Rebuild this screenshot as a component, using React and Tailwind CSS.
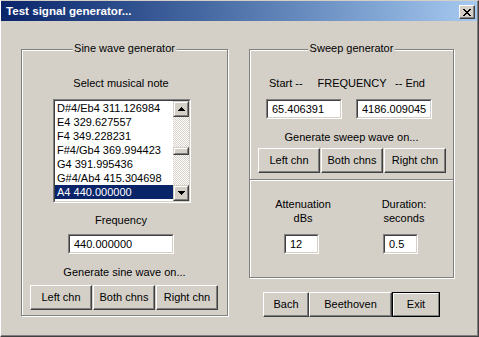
import React from "react";

const notes = [
  "D#4/Eb4 311.126984",
  "E4 329.627557",
  "F4 349.228231",
  "F#4/Gb4 369.994423",
  "G4 391.995436",
  "G#4/Ab4 415.304698",
  "A4 440.000000",
];

function Raised({ className = "", children }) {
  return (
    <div
      className={`flex items-center justify-center border border-t-white border-l-white border-b-[#404040] border-r-[#404040] shadow-[inset_-1px_-1px_0_#808080] bg-[#d4d0c8] ${className}`}
    >
      {children}
    </div>
  );
}

function Sunken({ className = "", innerClass = "", children }) {
  return (
    <div
      className={`border border-t-[#808080] border-l-[#808080] border-b-white border-r-white ${className}`}
    >
      <div
        className={`h-full w-full border border-t-[#404040] border-l-[#404040] border-b-[#d4d0c8] border-r-[#d4d0c8] bg-white ${innerClass}`}
      >
        {children}
      </div>
    </div>
  );
}

function Input({ value, className = "" }) {
  return (
    <Sunken className={`h-[20px] ${className}`} innerClass="flex items-center pl-[4px] leading-[13px]">
      <span>{value}</span>
    </Sunken>
  );
}

function ScrollBtn({ up }) {
  return (
    <div className="w-[16px] h-[16px] border border-t-[#d4d0c8] border-l-[#d4d0c8] border-b-[#404040] border-r-[#404040] bg-[#d4d0c8]">
      <div className="w-full h-full border border-t-white border-l-white border-b-[#808080] border-r-[#808080] flex items-center justify-center">
        <svg width="7" height="4" viewBox="0 0 7 4" shapeRendering="crispEdges">
          {up ? (
            <>
              <rect x="3" y="0" width="1" height="1" fill="#000" />
              <rect x="2" y="1" width="3" height="1" fill="#000" />
              <rect x="1" y="2" width="5" height="1" fill="#000" />
              <rect x="0" y="3" width="7" height="1" fill="#000" />
            </>
          ) : (
            <>
              <rect x="0" y="0" width="7" height="1" fill="#000" />
              <rect x="1" y="1" width="5" height="1" fill="#000" />
              <rect x="2" y="2" width="3" height="1" fill="#000" />
              <rect x="3" y="3" width="1" height="1" fill="#000" />
            </>
          )}
        </svg>
      </div>
    </div>
  );
}

function GroupLabel({ children }) {
  return (
    <div className="absolute left-1/2 -translate-x-1/2 top-[-8px] bg-[#d4d0c8] px-[2px] leading-[13px] whitespace-nowrap">
      {children}
    </div>
  );
}

const groupCls =
  "relative border border-[#808080] shadow-[inset_1px_1px_0_#fff,1px_1px_0_#fff]";

function CloseGlyph() {
  const rows = [
    [0, 1, 6, 7],
    [1, 2, 5, 6],
    [2, 3, 4, 5],
    [3, 4],
    [2, 3, 4, 5],
    [1, 2, 5, 6],
    [0, 1, 6, 7],
  ];
  return (
    <svg width="8" height="7" viewBox="0 0 8 7" shapeRendering="crispEdges">
      {rows.map((r, y) =>
        r.map((x) => <rect key={`${x}-${y}`} x={x} y={y} width="1" height="1" fill="#000" />)
      )}
    </svg>
  );
}

export default function App() {
  return (
    <div className="w-[479px] h-[337px] border border-l-white border-t-[#d4d0c8] border-r-[#404040] border-b-[#404040] bg-[#d4d0c8] font-['Liberation_Sans',Arial,sans-serif] text-[11px] text-black overflow-hidden">
      <div className="h-full border-r border-b border-r-[#808080] border-b-[#808080] flex flex-col">
        {/* Title bar */}
        <div className="h-[20px] flex items-start bg-linear-to-r from-[#0a246a] to-[#a6caf0] shrink-0">
          <div className="pl-[5px] h-full flex items-center text-white font-bold text-[11.6px] leading-[14px] whitespace-nowrap">
            Test signal generator...
          </div>
          <Raised className="ml-auto mr-[2px] mt-[4px] w-[16px] h-[14px]">
            <CloseGlyph />
          </Raised>
        </div>

        <div className="flex items-start">
          {/* Sine wave generator */}
          <div className={`${groupCls} ml-[20px] mt-[28px] w-[207px] h-[267px]`}>
            <GroupLabel>Sine wave generator</GroupLabel>
            <div className="flex flex-col items-start">
              <div className="ml-[39px] mt-[27px] w-[120px] h-[13px] leading-[13px] text-center whitespace-nowrap">
                Select musical note
              </div>
              <Sunken className="ml-[31px] mt-[9px] w-[138px] h-[104px]" innerClass="flex">
                <div className="w-[118px] flex flex-col">
                  {notes.map((n, i) => (
                    <div
                      key={n}
                      className={`h-[14px] leading-[14px] pl-[2px] whitespace-nowrap ${
                        i === notes.length - 1 ? "bg-[#0a246a] text-white" : ""
                      }`}
                    >
                      {n}
                    </div>
                  ))}
                </div>
                <div className="w-[16px] flex flex-col">
                  <ScrollBtn up />
                  <div className="h-[68px] bg-[repeating-conic-gradient(#fff_0_25%,#d4d0c8_0_50%)] bg-size-[2px_2px] flex flex-col">
                    <div className="mt-[30px] w-[16px] h-[8px] border border-t-[#d4d0c8] border-l-[#d4d0c8] border-b-[#404040] border-r-[#404040] bg-[#d4d0c8]">
                      <div className="w-full h-full border border-t-white border-l-white border-b-[#808080] border-r-[#808080]" />
                    </div>
                  </div>
                  <ScrollBtn />
                </div>
              </Sunken>
              <div className="ml-[39px] mt-[11px] w-[120px] h-[13px] leading-[13px] text-center">
                Frequency
              </div>
              <Input value="440.000000" className="ml-[46px] mt-[7px] w-[106px]" />
              <div className="mt-[12px] w-full h-[13px] leading-[13px] text-center whitespace-nowrap">
                Generate sine wave on...
              </div>
              <div className="ml-[8px] mt-[6px] flex gap-[1px]">
                <Raised className="w-[62px] h-[25px]">Left chn</Raised>
                <Raised className="w-[62px] h-[25px]">Both chns</Raised>
                <Raised className="w-[62px] h-[25px]">Right chn</Raised>
              </div>
            </div>
          </div>

          {/* Right column */}
          <div className="ml-[21px] mt-[28px] flex flex-col items-start">
            <div className={`${groupCls} w-[205px] h-[229px]`}>
              <GroupLabel>Sweep generator</GroupLabel>
              <div className="flex flex-col items-start">
                <div className="ml-[19px] mt-[27px] flex h-[13px] leading-[13px] whitespace-nowrap">
                  <span className="w-[40px]">Start --</span>
                  <span className="w-[86px] text-center">FREQUENCY</span>
                  <span>-- End</span>
                </div>
                <div className="ml-[16px] mt-[9px] flex gap-[14px]">
                  <Input value="65.406391" className="w-[76px]" />
                  <Input value="4186.009045" className="w-[76px]" />
                </div>
                <div className="mt-[12px] w-full h-[13px] leading-[13px] text-center whitespace-nowrap">
                  Generate sweep wave on...
                </div>
                <div className="ml-[8px] mt-[4px] flex gap-[1px]">
                  <Raised className="w-[62px] h-[25px]">Left chn</Raised>
                  <Raised className="w-[62px] h-[25px]">Both chns</Raised>
                  <Raised className="w-[62px] h-[25px]">Right chn</Raised>
                </div>
                <div className="mt-[6px] w-full">
                  <div className="h-[1px] bg-[#808080]" />
                  <div className="h-[1px] bg-white" />
                </div>
                <div className="ml-[13px] mt-[16px] flex gap-[21px]">
                  <div className="w-[80px] flex flex-col items-start">
                    <div className="w-full text-center leading-[14px]">
                      Attenuation
                      <br />
                      dBs
                    </div>
                    <Input value="12" className="ml-[21px] mt-[9px] w-[35px]" />
                  </div>
                  <div className="w-[80px] flex flex-col items-start">
                    <div className="w-full text-center leading-[14px]">
                      Duration:
                      <br />
                      seconds
                    </div>
                    <Input value="0.5" className="ml-[19px] mt-[9px] w-[35px]" />
                  </div>
                </div>
              </div>
            </div>
            <div className="ml-[14px] mt-[14px] flex">
              <Raised className="w-[46px] h-[25px]">Bach</Raised>
              <Raised className="w-[83px] h-[25px]">Beethoven</Raised>
              <div className="w-[48px] h-[25px] border border-black">
                <div className="w-full h-full flex items-center justify-center border border-t-white border-l-white border-b-[#808080] border-r-[#808080]">
                  Exit
                </div>
              </div>
            </div>
          </div>
        </div>
      </div>
    </div>
  );
}
